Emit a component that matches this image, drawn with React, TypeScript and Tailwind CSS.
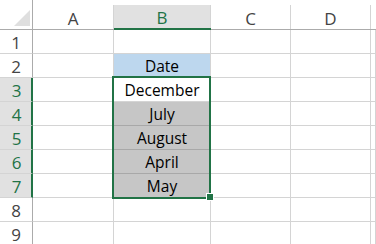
import React from "react";

function ColHeader({ label, selected, last }: { label: string; selected?: boolean; last?: boolean }) {
  return (
    <div
      className={
        "h-[30px] flex flex-col box-border " +
        (selected ? "border-b-2 border-[#217346]" : "border-b border-[#ababab]")
      }
    >
      <div className="h-[5px]" />
      <div
        className={
          "flex-1 flex items-center justify-center pt-[2px] text-[17px] leading-none " +
          (last ? "" : "border-r border-[#d4d4d4] ") +
          (selected ? "bg-[#e1e1e1] text-[#217346]" : "bg-white text-[#444444]")
        }
      >
        {label}
      </div>
    </div>
  );
}

function RowHeader({ n, selected }: { n: number; selected?: boolean }) {
  return (
    <div
      className={
        "h-[24px] box-border border-b flex items-center justify-center pt-[1px] text-[17px] leading-none " +
        (selected
          ? "bg-[#e1e1e1] text-[#217346] border-r-2 border-r-[#217346] border-b-[#d4d4d4] pl-[2px]"
          : "bg-white text-[#444444] border-r border-r-[#ababab] border-b-[#d4d4d4]")
      }
    >
      {n}
    </div>
  );
}

function Cell({ children, cls }: { children?: React.ReactNode; cls?: string }) {
  return (
    <div
      className={
        "h-[24px] box-border border-r border-b flex items-end justify-center pb-[1px] text-[15.5px] text-black leading-[20px] " +
        (cls ?? "bg-white border-[#d4d4d4]")
      }
    >
      {children}
    </div>
  );
}

export default function App() {
  const rows: { n: number; b?: string; cls?: string }[] = [
    { n: 1 },
    { n: 2, b: "Date", cls: "bg-[#bdd7ee] border-[#d4d4d4]" },
    { n: 3, b: "December", cls: "bg-white border-[#d4d4d4]" },
    { n: 4, b: "July", cls: "bg-[#c6c6c6] border-[#a8a8a8]" },
    { n: 5, b: "August", cls: "bg-[#c6c6c6] border-[#a8a8a8]" },
    { n: 6, b: "April", cls: "bg-[#c6c6c6] border-[#a8a8a8]" },
    { n: 7, b: "May", cls: "bg-[#c6c6c6] border-[#a8a8a8]" },
    { n: 8 },
    { n: 9 },
  ];
  return (
    <div
      className="relative w-[376px] h-[244px] overflow-hidden bg-white"
      style={{ fontFamily: '"Open Sans", "Liberation Sans", sans-serif' }}
    >
      <div className="grid grid-cols-[33px_81px_97px_80px_80px_1fr]">
        <div className="h-[30px] box-border border-b border-r border-[#ababab] bg-white flex items-end justify-end pr-[2px] pb-[3px]">
          <svg width="16" height="16" viewBox="0 0 16 16">
            <polygon points="16,0 16,16 0,16" fill="#dfdfdf" />
          </svg>
        </div>
        <ColHeader label="A" />
        <ColHeader label="B" selected />
        <ColHeader label="C" />
        <ColHeader label="D" />
        <ColHeader label="" last />
        {rows.map((r) => (
          <React.Fragment key={r.n}>
            <RowHeader n={r.n} selected={r.n >= 3 && r.n <= 7} />
            <Cell />
            <Cell cls={r.cls}>{r.b}</Cell>
            <Cell />
            <Cell />
            <Cell />
          </React.Fragment>
        ))}
      </div>
      <div className="absolute left-[112px] top-[76px] w-[99px] h-[123px] border-2 border-[#217346] pointer-events-none" />
      <div className="absolute left-[206px] top-[193px] w-[8px] h-[8px] bg-[#217346] border border-white" />
    </div>
  );
}
